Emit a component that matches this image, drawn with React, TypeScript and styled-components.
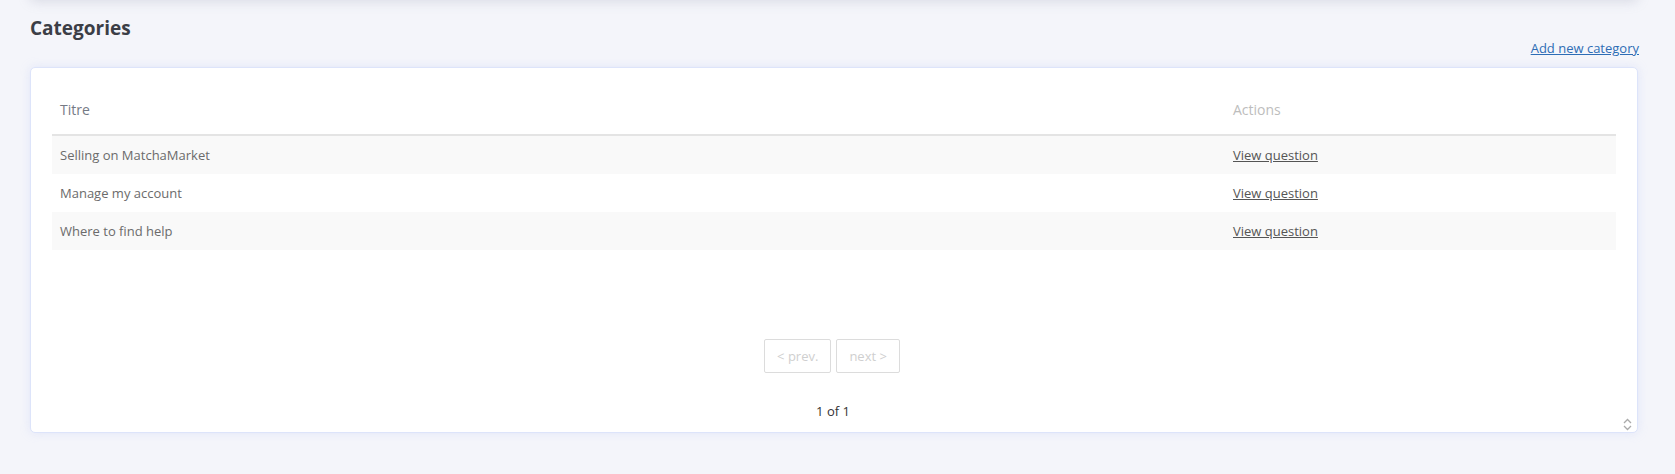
import styled, { createGlobalStyle } from "styled-components";

const GlobalStyle = createGlobalStyle`
    html, body {
        margin: 0;
        padding: 0;
        background-color: #f4f5fa;
        font-family: "Open Sans", "Liberation Sans", sans-serif;
    }
`;

const CATEGORIES = [
    { id: 1, title: "Selling on MatchaMarket" },
    { id: 2, title: "Manage my account" },
    { id: 3, title: "Where to find help" },
];

const PageStyled = styled.div`
    min-height: 474px;
    padding: 0 37px 0 30px;
    overflow: hidden;
`;

const TopCardStyled = styled.div`
    height: 40px;
    margin-top: -40px;
    background-color: #fff;
    border-radius: 5px;
    box-shadow: 0 2px 12px rgba(150, 155, 180, 0.28);
`;

const TitleStyled = styled.h2`
    margin: 14px 0 0;
    font-size: 19px;
    line-height: 28px;
    font-weight: 700;
    color: #3b3e46;
`;

const LinkRowStyled = styled.div`
    display: flex;
    justify-content: flex-end;
    margin-top: -3px;
    margin-right: -1px;
`;

const AddLinkStyled = styled.a`
    font-size: 13px;
    line-height: 18px;
    color: #2e6db5;
    text-decoration: underline;
    cursor: pointer;
`;

const CardStyled = styled.div`
    position: relative;
    margin-top: 10px;
    padding: 20px 21px 12px;
    background-color: #fff;
    border: 1px solid #dde4fa;
    border-radius: 5px;
    box-shadow: 0 0 10px rgba(190, 200, 250, 0.35);
`;

const RowStyled = styled.div<{ $striped?: boolean }>`
    display: grid;
    grid-template-columns: 75% 25%;
    align-items: center;
    height: 38px;
    background-color: ${({ $striped }) => ($striped ? "#f9f9f9" : "#fff")};
`;

const HeadRowStyled = styled(RowStyled)`
    box-sizing: border-box;
    height: 48px;
    padding-bottom: 4px;
    border-bottom: 2px solid #e4e4e4;
`;

const HeadCellStyled = styled.div<{ $muted?: boolean }>`
    padding: 0 8px;
    font-size: 14px;
    color: ${({ $muted }) => ($muted ? "#bdbdbd" : "#757a85")};
`;

const CellStyled = styled.div`
    padding: 0 8px;
    font-size: 13px;
    color: #6b6b6b;
`;

const ViewLinkStyled = styled.a`
    font-size: 13px;
    color: #555;
    text-decoration: underline;
    cursor: pointer;
`;

const PaginationStyled = styled.div`
    display: flex;
    justify-content: center;
    gap: 5px;
    margin-top: 89px;
    padding-right: 4px;
`;

const PageBtnStyled = styled.button`
    height: 34px;
    padding: 0 12px;
    background-color: #fff;
    border: 1px solid #dcdcdc;
    border-radius: 2px;
    font-family: inherit;
    font-size: 13px;
    color: #cfcfcf;
`;

const PageInfoStyled = styled.div`
    margin-top: 29px;
    text-align: center;
    font-size: 13px;
    line-height: 18px;
    color: #333;
    padding-right: 2px;
`;

const SortIconStyled = styled.svg`
    position: absolute;
    right: 5px;
    bottom: 1px;
`;

const App = () => {
    return (
        <PageStyled>
            <GlobalStyle />
            <TopCardStyled />
            <TitleStyled>Categories</TitleStyled>
            <LinkRowStyled>
                <AddLinkStyled>Add new category</AddLinkStyled>
            </LinkRowStyled>
            <CardStyled>
                <HeadRowStyled>
                    <HeadCellStyled>Titre</HeadCellStyled>
                    <HeadCellStyled $muted>Actions</HeadCellStyled>
                </HeadRowStyled>
                {CATEGORIES.map((item, i) => (
                    <RowStyled key={item.id} $striped={i % 2 === 0}>
                        <CellStyled>{item.title}</CellStyled>
                        <CellStyled>
                            <ViewLinkStyled>View question</ViewLinkStyled>
                        </CellStyled>
                    </RowStyled>
                ))}
                <PaginationStyled>
                    <PageBtnStyled disabled>&lt; prev.</PageBtnStyled>
                    <PageBtnStyled disabled>next &gt;</PageBtnStyled>
                </PaginationStyled>
                <PageInfoStyled>1 of 1</PageInfoStyled>
                <SortIconStyled width="9" height="13" viewBox="0 0 9 13" fill="none" stroke="#aaa" strokeWidth="1.3">
                    <path d="M1 5 L4.5 1.5 L8 5" />
                    <path d="M1 8 L4.5 11.5 L8 8" />
                </SortIconStyled>
            </CardStyled>
        </PageStyled>
    );
};

export default App;
